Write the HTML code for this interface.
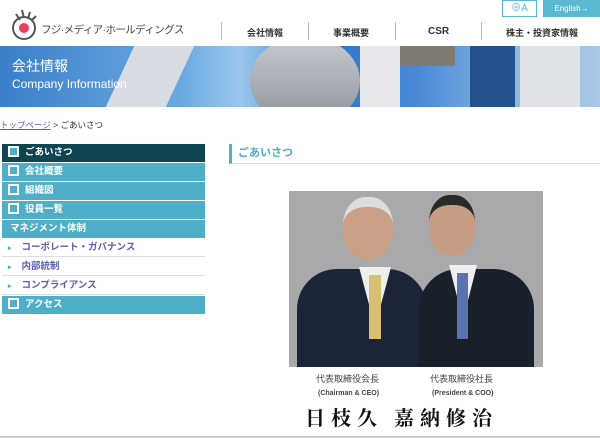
<!DOCTYPE html>
<html><head><meta charset="utf-8"><style>
*{margin:0;padding:0;box-sizing:border-box}
body{width:600px;height:438px;overflow:hidden;background:#fff;font-family:"Liberation Sans","Noto Sans CJK JP",sans-serif;position:relative}
.a{position:absolute}
.nav{font-size:9px;font-weight:bold;color:#333;top:26px}
.sep{top:22px;width:1px;height:18px;background:#bbb}
.side div{height:18px;line-height:18px;font-size:9.5px;font-weight:bold;color:#fff;margin-bottom:1px;padding-left:6px}
.side .b{background:#4fafc8}
.side .b:before{content:"";display:inline-block;width:7px;height:7px;border:2px solid #fff;background:#4fafc8;margin-right:6px;vertical-align:middle;position:relative;top:-1px}
.side .w{background:#fff;color:#5a5fb0;font-weight:bold;border-bottom:1px solid #ddd;padding-left:6px}
.side .w:before{content:"▸";color:#4fafc8;font-size:7px;margin-right:10px}
.side .b.n:before{display:none}
</style></head><body>
<svg class="a" style="left:8px;top:6px" width="36" height="36" viewBox="0 0 36 36"><circle cx="16" cy="22" r="11" fill="none" stroke="#555" stroke-width="2"/><circle cx="16" cy="22" r="5" fill="#e8405f"/><path d="M8 8 L12 14 M14 4 L16 12 M22 6 L20 13 M28 10 L24 14" stroke="#555" stroke-width="2" fill="none"/></svg>
<div class="a" style="left:41px;top:22px;font-size:10.5px;color:#444;letter-spacing:-0.6px">フジ·メディア·ホールディングス</div>
<div class="a sep" style="left:221px"></div><div class="a sep" style="left:308px"></div><div class="a sep" style="left:395px"></div><div class="a sep" style="left:481px"></div>
<div class="a nav" style="left:247px">会社情報</div>
<div class="a nav" style="left:333px">事業概要</div>
<div class="a nav" style="left:428px;font-size:10px">CSR</div>
<div class="a nav" style="left:506px">株主・投資家情報</div>
<div class="a" style="left:502px;top:0;width:35px;height:17px;border:1px solid #5ab8d0;color:#5ab8d0;font-size:10px;text-align:center;line-height:15px">⊕A</div>
<div class="a" style="left:543px;top:0;width:57px;height:17px;background:#5ab8d0;color:#fff;font-size:8px;text-align:center;line-height:17px">English→</div>
<div class="a" style="left:0;top:46px;width:600px;height:61px;background:linear-gradient(90deg,#3a7fc8 0%,#6aa8e0 30%,#9bc7ee 40%,#2f76c8 55%,#4b8ad8 70%,#8ab7e0 85%,#aac8e8 100%);overflow:hidden">
<div class="a" style="left:120px;top:0;width:60px;height:61px;background:#d8dde4;transform:skewX(-25deg)"></div>
<div class="a" style="left:250px;top:-10px;width:110px;height:90px;border-radius:50%;background:linear-gradient(#c9ccd2,#8d9199)"></div>
<div class="a" style="left:360px;top:0;width:40px;height:61px;background:#e6e8ec"></div>
<div class="a" style="left:400px;top:0;width:55px;height:20px;background:#7f7a72"></div>
<div class="a" style="left:470px;top:0;width:45px;height:61px;background:#23518f"></div>
<div class="a" style="left:520px;top:0;width:60px;height:61px;background:#dfe3e8"></div>
<div class="a" style="left:12px;top:10px;color:#fff;font-size:14px">会社情報</div>
<div class="a" style="left:12px;top:31px;color:#fff;font-size:12px">Company Information</div>
</div>
<div class="a" style="left:0;top:119px;font-size:8.5px;color:#333"><span style="color:#5a5fb0;text-decoration:underline">トップページ</span> &gt; ごあいさつ</div>
<div class="a side" style="left:2px;top:144px;width:203px">
<div class="b" style="background:#0f4550">ごあいさつ</div>
<div class="b">会社概要</div>
<div class="b">組織図</div>
<div class="b">役員一覧</div>
<div class="b n" style="padding-left:8px">マネジメント体制</div>
<div class="w">コーポレート・ガバナンス</div>
<div class="w">内部統制</div>
<div class="w">コンプライアンス</div>
<div class="b">アクセス</div>
</div>
<div class="a" style="left:229px;top:144px;width:371px;height:20px;border-left:3px solid #4fafc8;border-bottom:1px solid #cde6ee;padding-left:6px;font-size:11px;font-weight:bold;color:#4fafc8;line-height:18px">ごあいさつ</div>
<div class="a" style="left:289px;top:191px;width:254px;height:176px;background:#a9a8ab;overflow:hidden">
<div class="a" style="left:54px;top:6px;width:50px;height:62px;border-radius:45%;background:#c99f86;border-top:10px solid #ddd"></div>
<div class="a" style="left:140px;top:4px;width:46px;height:60px;border-radius:45%;background:#c89b83;border-top:10px solid #2a2a2a"></div>
<div class="a" style="left:8px;top:78px;width:130px;height:110px;background:#1c2438;border-radius:40px 40px 0 0"></div>
<div class="a" style="left:130px;top:78px;width:115px;height:110px;background:#1a1f2c;border-radius:40px 40px 0 0"></div>
<div class="a" style="left:70px;top:76px;width:32px;height:60px;background:#eee;clip-path:polygon(0 0,100% 0,50% 100%)"></div>
<div class="a" style="left:80px;top:84px;width:12px;height:64px;background:#d8bf72"></div>
<div class="a" style="left:160px;top:74px;width:28px;height:55px;background:#eee;clip-path:polygon(0 0,100% 0,50% 100%)"></div>
<div class="a" style="left:168px;top:82px;width:11px;height:66px;background:#5a73b0"></div>
</div>
<div class="a" style="left:316px;top:372px;font-size:9px;color:#444">代表取締役会長</div>
<div class="a" style="left:318px;top:390px;font-size:7px;color:#444;font-weight:bold">(Chairman &amp; CEO)</div>
<div class="a" style="left:430px;top:372px;font-size:9px;color:#444">代表取締役社長</div>
<div class="a" style="left:432px;top:390px;font-size:7px;color:#444;font-weight:bold">(President &amp; COO)</div>
<div class="a" style="left:305px;top:402px;font-family:'Noto Serif CJK SC',serif;font-size:20px;font-weight:bold;color:#111;letter-spacing:6px">日枝久 嘉納修治</div>
<div class="a" style="left:0;top:436px;width:600px;height:2px;background:#ccc"></div>
</body></html>
